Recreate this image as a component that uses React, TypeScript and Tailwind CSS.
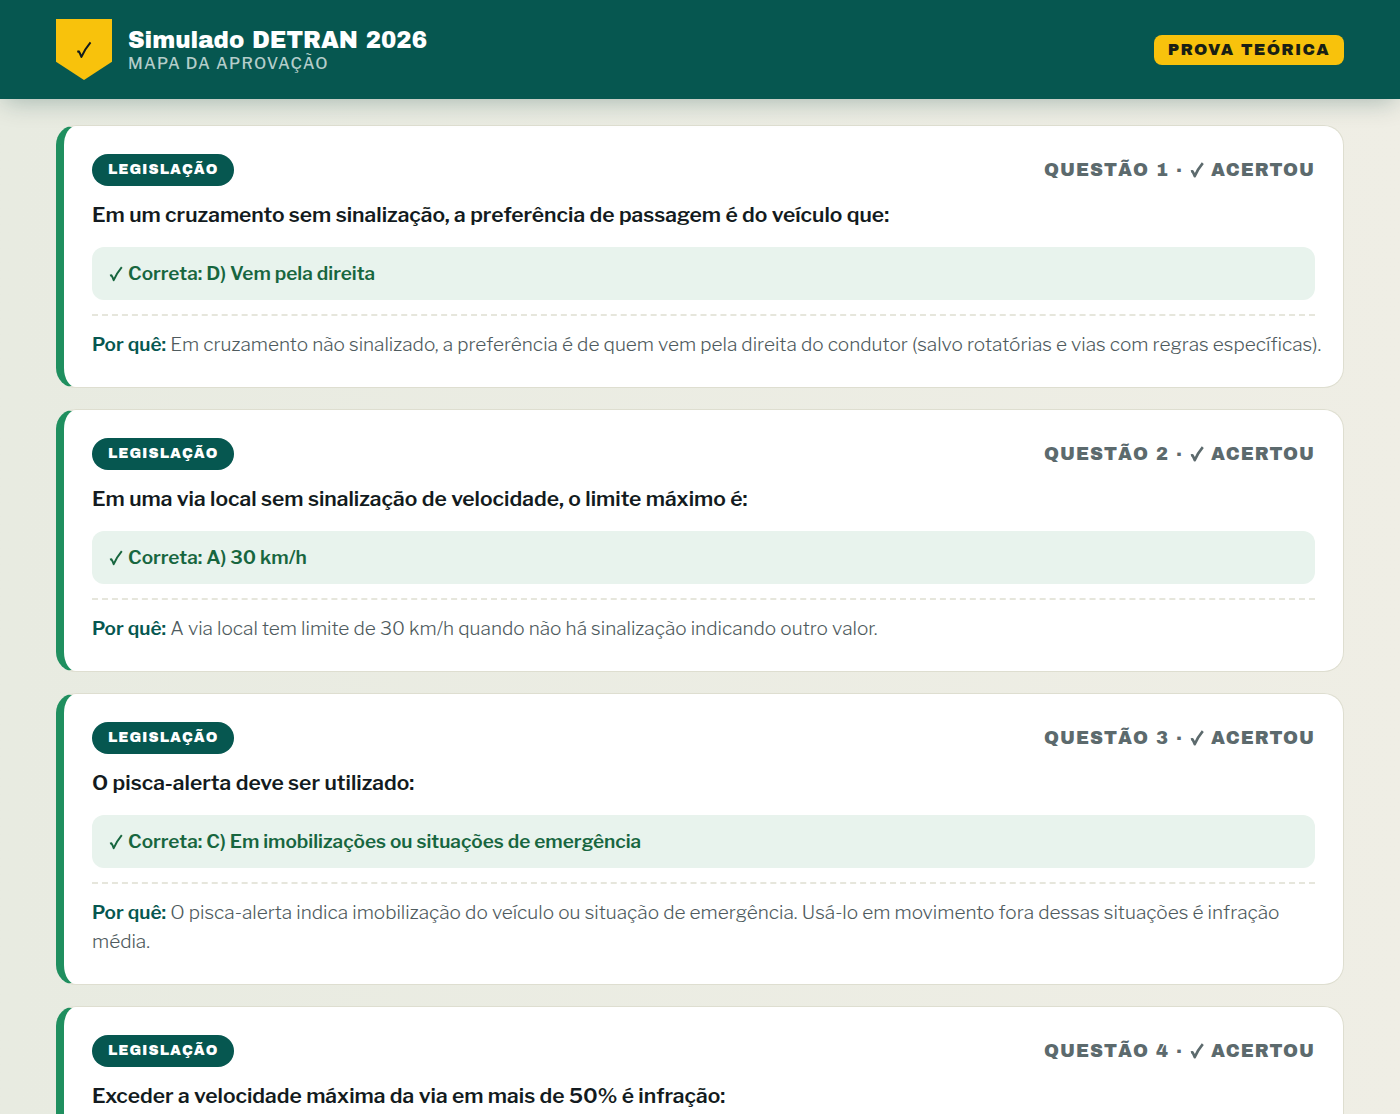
const QUESTIONS = [
  {
    topic: "Legislação",
    title: "Em um cruzamento sem sinalização, a preferência de passagem é do veículo que:",
    answer: "D) Vem pela direita",
    reason:
      "Em cruzamento não sinalizado, a preferência é de quem vem pela direita do condutor (salvo rotatórias e vias com regras específicas).",
  },
  {
    topic: "Legislação",
    title: "Em uma via local sem sinalização de velocidade, o limite máximo é:",
    answer: "A) 30 km/h",
    reason: "A via local tem limite de 30 km/h quando não há sinalização indicando outro valor.",
  },
  {
    topic: "Legislação",
    title: "O pisca-alerta deve ser utilizado:",
    answer: "C) Em imobilizações ou situações de emergência",
    reason:
      "O pisca-alerta indica imobilização do veículo ou situação de emergência. Usá-lo em movimento fora dessas situações é infração média.",
  },
  {
    topic: "Legislação",
    title: "Exceder a velocidade máxima da via em mais de 50% é infração:",
    answer: "",
    reason: "",
  },
];

const Check = ({ className }: { className: string }) => (
  <svg
    viewBox="0 0 14 16"
    fill="none"
    stroke="currentColor"
    strokeLinejoin="round"
    className={className}
    aria-hidden="true">
    <path d="M1 9.6 L2.4 9.2 Q3.6 11 4.7 14.2 Q7.6 7.4 12.8 1.2" />
  </svg>
);

const Header = () => (
  <header className="relative z-10 flex items-center justify-between bg-[#065750] px-14 py-[19px] shadow-[0_6px_24px_-4px_rgba(6,60,55,0.3)]">
    <div className="flex items-center gap-4">
      <div className="flex h-[61px] w-14 items-center justify-center bg-[#f8c20c] text-[#111a1c] [clip-path:polygon(0_0,100%_0,100%_70%,50%_100%,0_70%)]">
        <Check className="h-[18px] w-4 stroke-[1.8]" />
      </div>
      <div className="pt-1">
        <h1 className="font-['Archivo_Black','Inter',sans-serif] text-[23px] leading-6 font-normal text-white">
          Simulado DETRAN 2026
        </h1>
        <p className="text-base leading-[22px] font-medium tracking-[0.08em] text-[#b4cdca] uppercase">
          Mapa da Aprovação
        </p>
      </div>
    </div>
    <span className="rounded-lg bg-[#f8c20c] px-3.5 py-1 font-['Archivo_Black','Inter',sans-serif] text-base leading-[22px] font-normal tracking-[0.08em] text-[#1a1f14] uppercase">
      Prova Teórica
    </span>
  </header>
);

const QuestionCard = ({ question, number }: { question: (typeof QUESTIONS)[number]; number: number }) => (
  <article className="rounded-[20px] border border-l-8 border-[#deded0] border-l-[#1f8f5f] bg-white p-7">
    <div className="flex items-center justify-between">
      <span className="rounded-full bg-[#065750] px-4 py-1 font-['Archivo_Black','Inter',sans-serif] text-sm leading-6 tracking-[1px] text-white uppercase">
        {question.topic}
      </span>
      <span className="flex items-center gap-1.5 font-['Archivo_Black','Inter',sans-serif] text-lg leading-8 tracking-[1px] text-[#5c6a6d] uppercase">
        Questão {number} ·
        <Check className="h-4 w-4 stroke-[2.6]" />
        Acertou
      </span>
    </div>
    <h2 className="mt-3.5 text-[21px] leading-[30px] font-semibold text-[#131b20]">{question.title}</h2>
    {question.answer && (
      <p className="mt-[17px] flex items-center gap-1 rounded-xl bg-[#e8f3ed] px-4 py-3 text-[19px] leading-[29px] font-semibold text-[#17663f]">
        <Check className="h-4 w-4 stroke-[2]" />
        Correta: {question.answer}
      </p>
    )}
    {question.reason && (
      <div className="mt-3.5 border-t-2 border-dashed border-[#e6e6dc] pt-3.5">
        <p className="-mr-3 text-[19px] leading-[29px] font-light text-[#4f5b5e]">
          <strong className="font-semibold text-[#065750]">Por quê:</strong> {question.reason}
        </p>
      </div>
    )}
  </article>
);

const App = () => {
  return (
    <div className="h-screen overflow-hidden bg-linear-to-r from-[#e8ebe1] to-[#efeee5] font-['Libre_Franklin','Inter',sans-serif]">
      <Header />
      <main className="flex flex-col gap-[21px] px-14 pt-[26px]">
        {QUESTIONS.map((question, index) => (
          <QuestionCard key={question.title} question={question} number={index + 1} />
        ))}
      </main>
    </div>
  );
};

export default App;
